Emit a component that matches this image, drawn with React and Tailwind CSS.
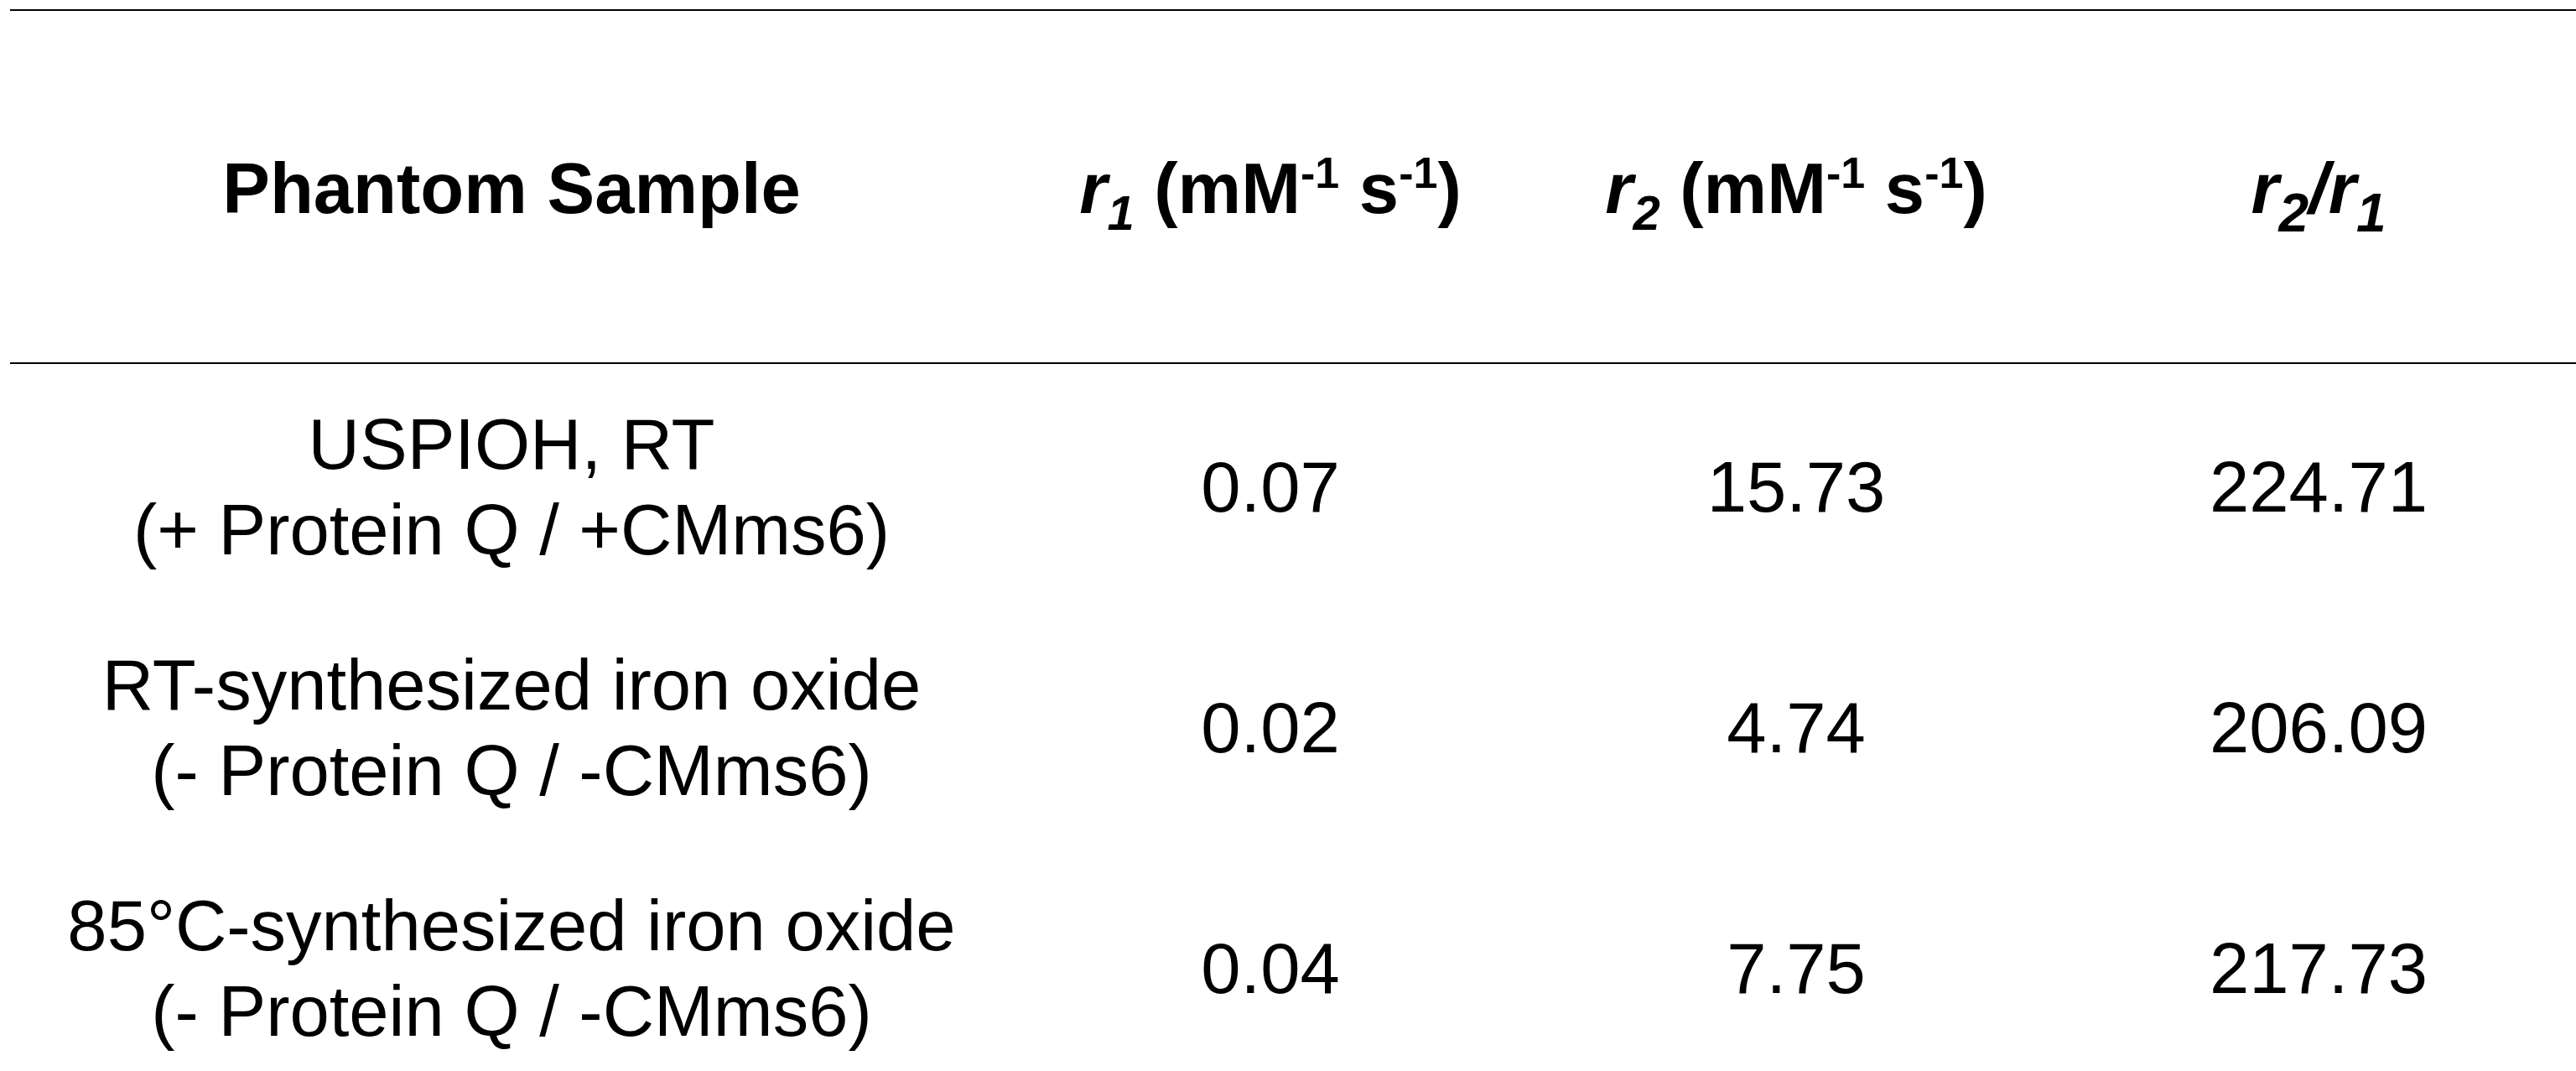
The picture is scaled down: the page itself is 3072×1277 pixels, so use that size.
const rows = [
  { name: 'USPIOH, RT', sub: '(+ Protein Q / +CMms6)', r1: '0.07', r2: '15.73', ratio: '224.71' },
  { name: 'RT-synthesized iron oxide', sub: '(- Protein Q / -CMms6)', r1: '0.02', r2: '4.74', ratio: '206.09' },
  { name: '85°C-synthesized iron oxide', sub: '(- Protein Q / -CMms6)', r1: '0.04', r2: '7.75', ratio: '217.73' },
];

const Sub = ({ children }) => (
  <span className="italic text-[58px] leading-[0] align-[-20px]">{children}</span>
);

const BigSub = ({ children }) => (
  <span className="italic text-[64px] leading-[0] align-[-22px]">{children}</span>
);

const Sup = ({ children }) => (
  <span className="text-[52px] leading-[0] align-[30px]">{children}</span>
);

const Unit = () => (
  <span>
    {' '}(mM<Sup>-1</Sup> s<Sup>-1</Sup>)
  </span>
);

export default function App() {
  return (
    <div className="h-[1277px] w-[3072px] overflow-hidden bg-white text-black font-['Liberation_Sans',Arial,sans-serif]">
      <div className="ml-[12px] pt-[11px]">
        {/* header */}
        <div className="grid h-[423px] grid-cols-[1196px_614px_640px_622px] border-y-2 border-black text-[85px] font-bold">
          <div className="flex items-center justify-center pt-[4px]">Phantom Sample</div>
          <div className="flex items-center justify-center pt-[4px] whitespace-nowrap">
            <span>
              <span className="italic">r</span>
              <Sub>1</Sub>
              <Unit />
            </span>
          </div>
          <div className="flex items-center justify-center pt-[4px] whitespace-nowrap">
            <span>
              <span className="italic">r</span>
              <Sub>2</Sub>
              <Unit />
            </span>
          </div>
          <div className="flex items-center justify-center pt-[4px] pr-[16px] whitespace-nowrap italic">
            <span>
              r<BigSub>2</BigSub>/r<BigSub>1</BigSub>
            </span>
          </div>
        </div>

        {/* body */}
        <div className="pt-[3px] text-[85px] leading-[1.2]">
          {rows.map((row) => (
            <div key={row.name} className="grid h-[287px] grid-cols-[1196px_614px_640px_622px] items-center">
              <div className="text-center whitespace-nowrap">
                <div>{row.name}</div>
                <div>{row.sub}</div>
              </div>
              <div className="text-center">{row.r1}</div>
              <div className="text-center">{row.r2}</div>
              <div className="pr-[16px] text-center">{row.ratio}</div>
            </div>
          ))}
        </div>
      </div>
    </div>
  );
}
